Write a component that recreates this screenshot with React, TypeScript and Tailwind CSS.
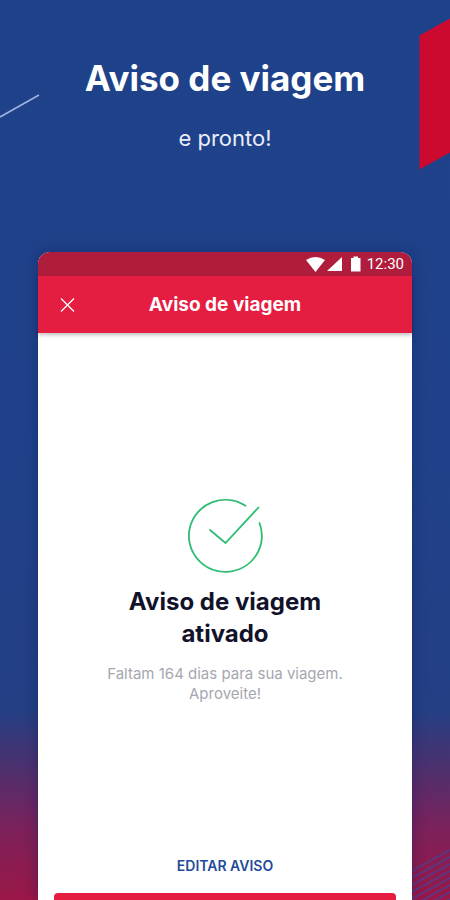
import React from 'react';

const stripes = [849, 856, 863, 870, 877, 884, 891, 898];

function Backdrop() {
    return (
        <>
            <svg className="absolute left-0 top-0" width="50" height="180" viewBox="0 0 50 180" aria-hidden="true">
                <path d="M0 117 L39 95" stroke="#9db5dc" strokeWidth="1.6" fill="none" />
            </svg>

            <svg className="absolute right-0 top-0" width="32" height="180" viewBox="418 0 32 180" aria-hidden="true">
                <path d="M419.500 35.500 L450 18.500 V152.500 L419.500 169.500 Z" fill="#cc0a2f" />
            </svg>

            <svg className="absolute right-0 bottom-0" width="40" height="60" viewBox="410 840 40 60" aria-hidden="true">
                {stripes.map((y) => (
                    <path key={y} d={`M410 ${y + 23} L450 ${y + 1}`} stroke="#50408c" strokeWidth="1.8" opacity="0.85" />
                ))}
            </svg>
        </>
    );
}

function StatusBar() {
    return (
        <div className="flex h-6 items-center justify-end bg-[#b01d3c] pr-2 text-white">
            <svg width="56" height="18" viewBox="0 0 56 18" fill="currentColor" aria-hidden="true">
                <path d="M0 5 Q9.500 -1 19 5 L9.500 17 Z" />
                <path d="M36 2 V16 H21 Z" />
                <path d="M47.500 1.500 H52 V3 H54.500 V16.500 H45 V3 H47.500 Z" />
            </svg>
            <span className="ml-[5px] font-[Roboto] text-[15px] leading-6">12:30</span>
        </div>
    );
}

function AppBar() {
    return (
        <div className="relative z-10 flex h-[57px] items-center bg-[#e51d40] px-5 text-white shadow-[0_2px_4px_rgba(0,0,0,0.25)]">
            <button type="button" aria-label="Fechar" className="flex w-5 justify-center">
                <svg width="16" height="16" viewBox="0 0 16 16" stroke="currentColor" strokeWidth="1.3" aria-hidden="true">
                    <path d="M1 1.500 L14 14.500 M14 1.500 L1 14.500" />
                </svg>
            </button>
            <h2 className="flex-1 pr-5 text-center text-[19px] leading-6 font-bold">Aviso de viagem</h2>
        </div>
    );
}

function CheckIcon() {
    return (
        <svg width="80" height="80" viewBox="0 0 80 80" fill="none" stroke="#2fbd73" strokeWidth="1.8" strokeLinecap="round" aria-hidden="true">
            <path d="M60.500 9.800 A36.500 36 0 1 0 74.500 27" />
            <path d="M25 34 L40.500 47 L73.500 11.500" />
        </svg>
    );
}

export default function App() {
    return (
        <div className="relative flex min-h-screen flex-col overflow-hidden bg-[linear-gradient(to_bottom,#1e428a_0%,#20418a_50%,#243f84_79%,#4b316f_85%,#7b215b_92%,#9b1747_100%)] font-[Inter,sans-serif]">
            <Backdrop />

            <header className="relative pt-14 pb-[100px] text-center text-white">
                <h1 className="text-[35px] leading-11 font-bold">Aviso de viagem</h1>
                <p className="mt-6 text-[22px] leading-7 font-normal text-[#e9edf8]">e pronto!</p>
            </header>

            <main className="relative mx-[38px] flex flex-1 flex-col rounded-t-xl bg-white shadow-[0_0_14px_rgba(10,20,80,0.35)]">
                <div className="overflow-hidden rounded-t-xl">
                    <StatusBar />
                </div>
                <AppBar />

                <section className="flex flex-col items-center px-12 pt-[163px] text-center">
                    <CheckIcon />
                    <h3 className="mt-[10px] max-w-[240px] text-[24px] leading-8 font-bold text-[#12122b]">Aviso de viagem ativado</h3>
                    <p className="mt-[14px] text-[15px] leading-5 text-[#a5a7b0]">
                        Faltam 164 dias para sua viagem.
                        <br />
                        Aproveite!
                    </p>
                </section>

                <footer className="mt-auto flex flex-col px-4 pt-10">
                    <button type="button" className="mb-2 h-10 text-[14px] font-semibold text-[#1f4c9a]">EDITAR AVISO</button>
                    <button type="button" aria-label="Continuar" className="-mb-[41px] h-12 rounded bg-[#e51d40]" />
                </footer>
            </main>
        </div>
    );
}
